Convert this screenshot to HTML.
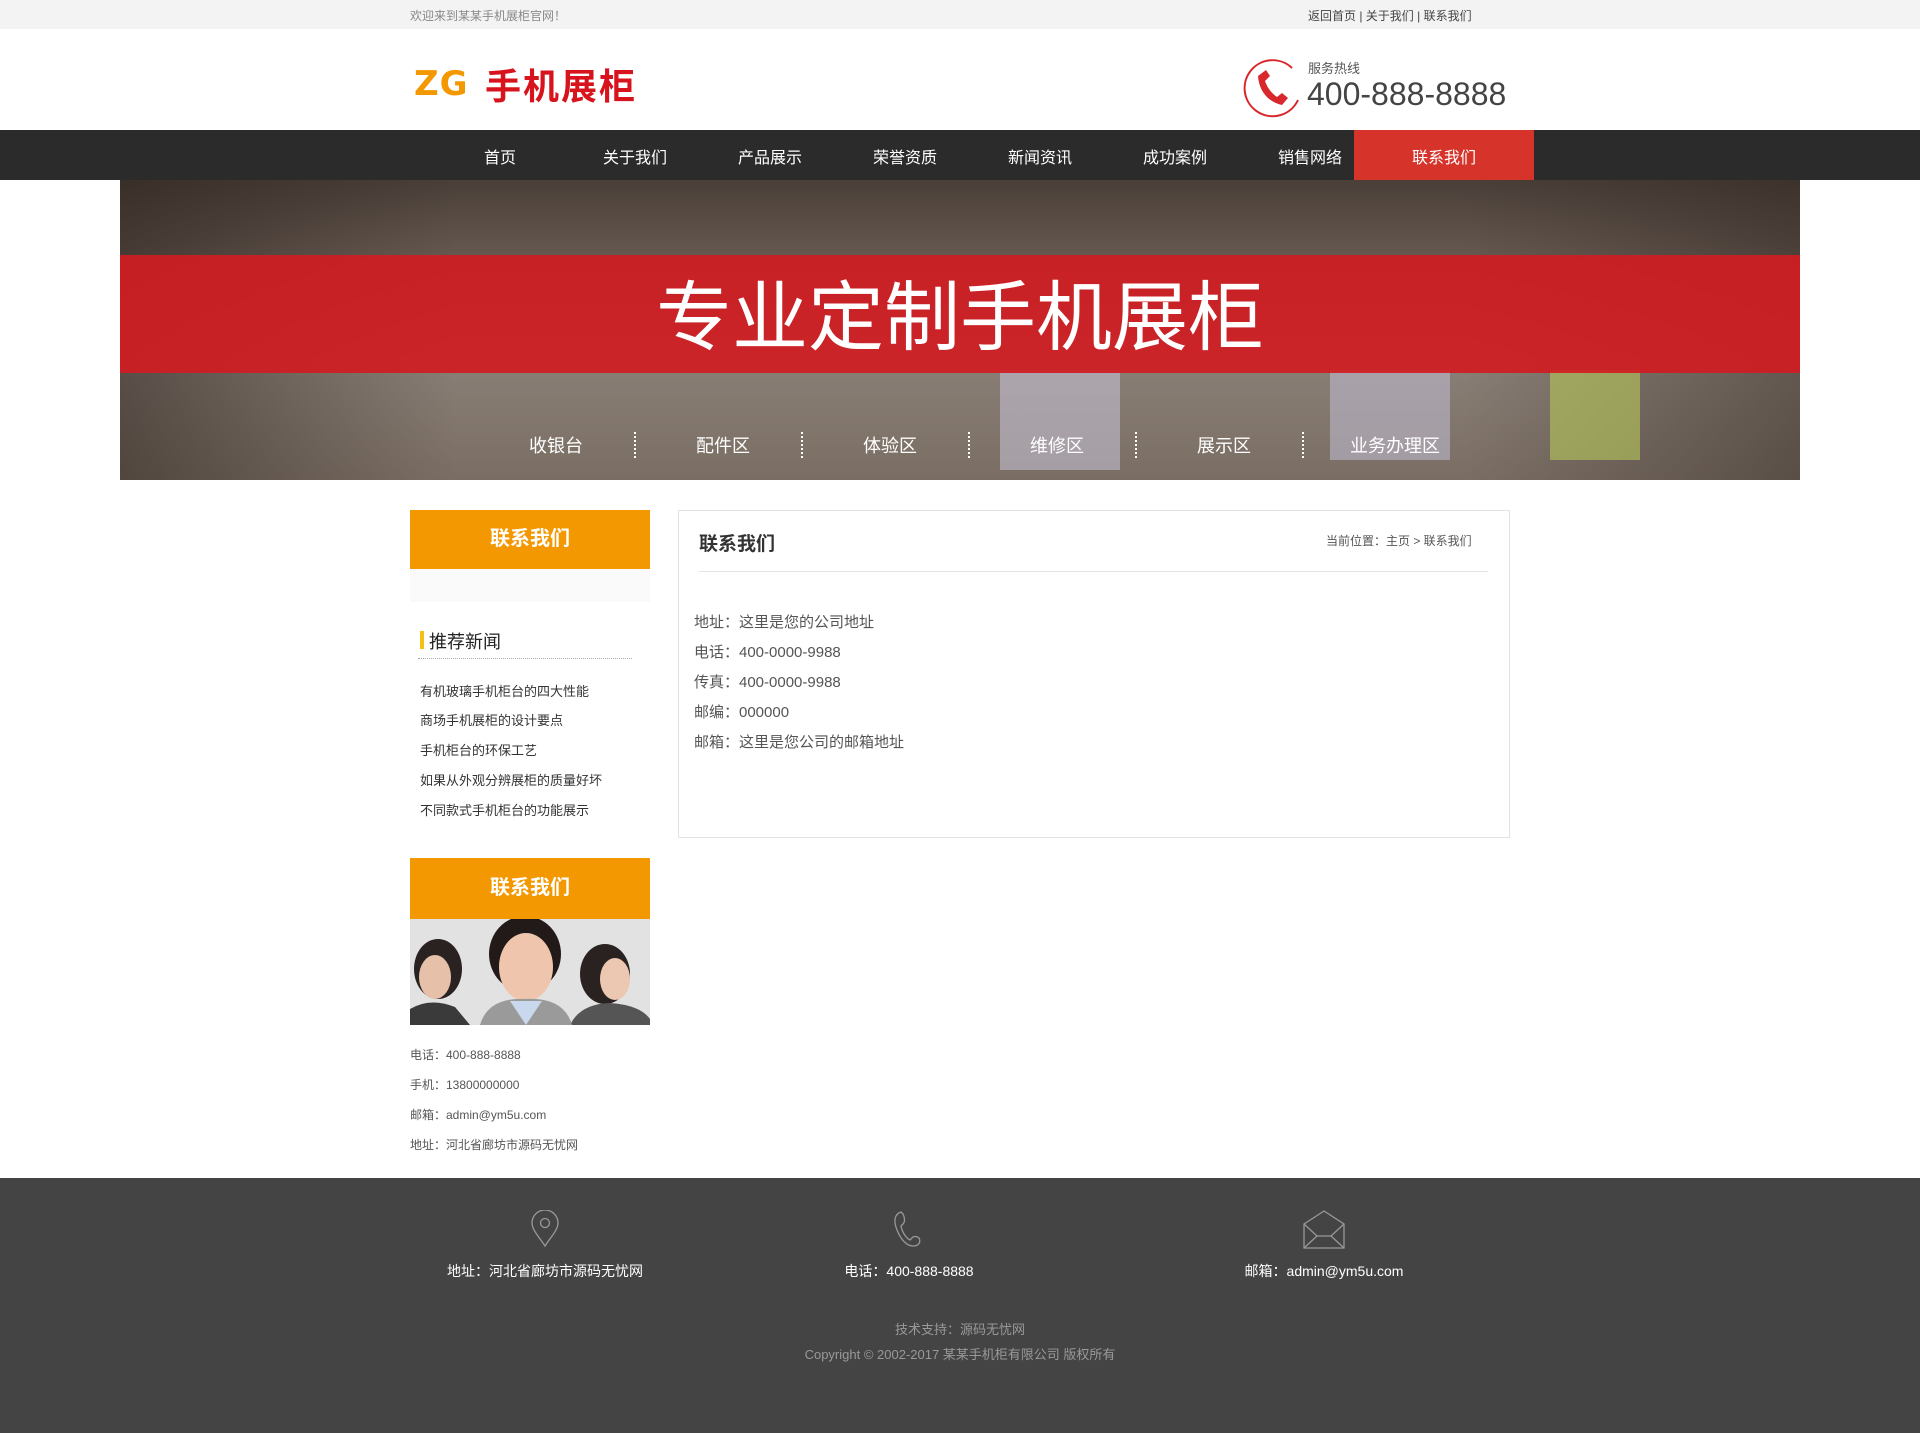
<!DOCTYPE html>
<html><head><meta charset="utf-8"><style>
*{margin:0;padding:0;box-sizing:border-box}
body{width:1920px;height:1433px;position:relative;background:#fff;font-family:"Liberation Sans","Noto Sans CJK SC",sans-serif;overflow:hidden;color:#333}
.a{position:absolute;white-space:nowrap}
</style></head><body>
<div class="a" style="left:0;top:0;width:1920px;height:29px;background:#f3f3f3"></div>
<div class="a" style="left:410px;top:7px;font-size:12px;color:#888">欢迎来到某某手机展柜官网！</div>
<div class="a" style="left:1308px;top:7px;font-size:12px;color:#444">返回首页 | 关于我们 | 联系我们</div>

<div class="a" style="left:414px;top:64px;font-size:34px;font-weight:bold;color:#f39800;letter-spacing:1px;font-family:'DejaVu Sans',sans-serif">ZG</div>
<div class="a" style="left:485px;top:58px;font-size:36px;font-weight:bold;color:#d7141d;letter-spacing:2px;font-family:'Noto Sans CJK SC',sans-serif">手机展柜</div>

<svg class="a" style="left:1240px;top:56px" width="64" height="64" viewBox="0 0 64 64">
<path d="M52 12 A28 28 0 1 0 58 44" fill="none" stroke="#d8282b" stroke-width="2"/>
<path d="M18 20 l8-6 4 6-5 5 c2 6 6 12 12 16 l5-4 6 5-6 7 c-14-3-23-14-24-29z" fill="#d8282b"/>
</svg>
<div class="a" style="left:1308px;top:58px;font-size:13px;color:#555">服务热线</div>
<div class="a" style="left:1307px;top:76px;font-size:32px;color:#444;font-family:'Liberation Sans',sans-serif">400-888-8888</div>

<div class="a" style="left:0;top:130px;width:1920px;height:50px;background:#2b2b2b"></div>
<div class="a" style="left:1354px;top:130px;width:180px;height:50px;background:#d6332a"></div>
<div style="font-size:16px;color:#fff">
<div class="a" style="left:460px;top:144px;width:80px;text-align:center">首页</div>
<div class="a" style="left:595px;top:144px;width:80px;text-align:center">关于我们</div>
<div class="a" style="left:730px;top:144px;width:80px;text-align:center">产品展示</div>
<div class="a" style="left:865px;top:144px;width:80px;text-align:center">荣誉资质</div>
<div class="a" style="left:1000px;top:144px;width:80px;text-align:center">新闻资讯</div>
<div class="a" style="left:1135px;top:144px;width:80px;text-align:center">成功案例</div>
<div class="a" style="left:1270px;top:144px;width:80px;text-align:center">销售网络</div>
<div class="a" style="left:1404px;top:144px;width:80px;text-align:center">联系我们</div>
</div>

<div class="a" style="left:120px;top:180px;width:1680px;height:300px;background:linear-gradient(180deg,#4a3f38 0%,#6a5d55 30%,#8a7f76 60%,#7a6e64 100%)"></div>
<div class="a" style="left:120px;top:180px;width:1680px;height:300px;background:linear-gradient(90deg,rgba(40,30,25,.5) 0%,rgba(0,0,0,0) 20%,rgba(0,0,0,0) 80%,rgba(40,30,25,.4) 100%)"></div>
<div class="a" style="left:1000px;top:370px;width:120px;height:100px;background:#c8c5d8;opacity:.55"></div>
<div class="a" style="left:1330px;top:370px;width:120px;height:90px;background:#c3c0d6;opacity:.55"></div>
<div class="a" style="left:1550px;top:370px;width:90px;height:90px;background:#b8c85a;opacity:.6"></div>
<div class="a" style="left:120px;top:255px;width:1680px;height:118px;background:rgba(208,28,34,.92)"></div>
<div class="a" style="left:0;top:256px;width:1920px;text-align:center;font-size:76px;color:#fff;font-family:'Noto Sans CJK SC',sans-serif;letter-spacing:0">专业定制手机展柜</div>
<div style="font-size:18px;color:#fff">
<div class="a" style="left:506px;top:432px;width:100px;text-align:center">收银台</div>
<div class="a" style="left:673px;top:432px;width:100px;text-align:center">配件区</div>
<div class="a" style="left:840px;top:432px;width:100px;text-align:center">体验区</div>
<div class="a" style="left:1007px;top:432px;width:100px;text-align:center">维修区</div>
<div class="a" style="left:1174px;top:432px;width:100px;text-align:center">展示区</div>
<div class="a" style="left:1345px;top:432px;width:100px;text-align:center">业务办理区</div>
</div>
<div class="a" style="left:634px;top:432px;height:26px;border-left:2px dotted #fff"></div>
<div class="a" style="left:801px;top:432px;height:26px;border-left:2px dotted #fff"></div>
<div class="a" style="left:968px;top:432px;height:26px;border-left:2px dotted #fff"></div>
<div class="a" style="left:1135px;top:432px;height:26px;border-left:2px dotted #fff"></div>
<div class="a" style="left:1302px;top:432px;height:26px;border-left:2px dotted #fff"></div>

<div class="a" style="left:410px;top:510px;width:240px;height:59px;background:#f39800;color:#fff;font-size:20px;font-weight:bold;text-align:center;line-height:59px">联系我们</div>
<div class="a" style="left:410px;top:569px;width:240px;height:33px;background:#fafafa"></div>
<div class="a" style="left:420px;top:631px;width:4px;height:18px;background:#f5c116"></div>
<div class="a" style="left:429px;top:628px;font-size:18px;color:#222">推荐新闻</div>
<div class="a" style="left:418px;top:658px;width:214px;border-top:1px dotted #aaa"></div>
<div style="font-size:13px;color:#333">
<div class="a" style="left:420px;top:681px">有机玻璃手机柜台的四大性能</div>
<div class="a" style="left:420px;top:710px">商场手机展柜的设计要点</div>
<div class="a" style="left:420px;top:740px">手机柜台的环保工艺</div>
<div class="a" style="left:420px;top:770px">如果从外观分辨展柜的质量好坏</div>
<div class="a" style="left:420px;top:800px">不同款式手机柜台的功能展示</div>
</div>

<div class="a" style="left:410px;top:858px;width:240px;height:61px;background:#f39800;color:#fff;font-size:20px;font-weight:bold;text-align:center;line-height:61px">联系我们</div>
<svg class="a" style="left:410px;top:919px" width="240" height="106" viewBox="0 0 240 106">
<rect width="240" height="106" fill="#e2e2e2"/>
<ellipse cx="28" cy="50" rx="24" ry="30" fill="#2a2220"/>
<ellipse cx="25" cy="58" rx="16" ry="22" fill="#e6c0a8"/>
<path d="M0 106 L0 90 Q20 78 45 88 L60 106z" fill="#3a3a3a"/>
<ellipse cx="195" cy="55" rx="25" ry="30" fill="#2a2220"/>
<ellipse cx="205" cy="60" rx="15" ry="21" fill="#ecc8b2"/>
<path d="M160 106 Q170 85 200 84 Q230 86 240 100 L240 106z" fill="#555"/>
<ellipse cx="115" cy="35" rx="36" ry="38" fill="#221a18"/>
<ellipse cx="116" cy="48" rx="27" ry="34" fill="#efc6ad"/>
<path d="M70 106 Q78 78 116 80 Q154 78 162 106z" fill="#9a9a9a"/>
<path d="M100 82 L116 106 L132 82z" fill="#c9d8ec"/>
</svg>
<div style="font-size:12px;color:#555">
<div class="a" style="left:410px;top:1046px">电话：400-888-8888</div>
<div class="a" style="left:410px;top:1076px">手机：13800000000</div>
<div class="a" style="left:410px;top:1106px">邮箱：admin@ym5u.com</div>
<div class="a" style="left:410px;top:1136px">地址：河北省廊坊市源码无忧网</div>
</div>

<div class="a" style="left:678px;top:510px;width:832px;height:328px;border:1px solid #e3e3e3"></div>
<div class="a" style="left:699px;top:529px;font-size:19px;font-weight:bold;color:#333">联系我们</div>
<div class="a" style="left:1326px;top:532px;font-size:12px;color:#555">当前位置：主页 &gt; 联系我们</div>
<div class="a" style="left:699px;top:571px;width:789px;border-top:1px solid #e5e5e5"></div>
<div style="font-size:15px;color:#555">
<div class="a" style="left:694px;top:611px">地址：这里是您的公司地址</div>
<div class="a" style="left:694px;top:641px">电话：400-0000-9988</div>
<div class="a" style="left:694px;top:671px">传真：400-0000-9988</div>
<div class="a" style="left:694px;top:701px">邮编：000000</div>
<div class="a" style="left:694px;top:731px">邮箱：这里是您公司的邮箱地址</div>
</div>

<div class="a" style="left:0;top:1178px;width:1920px;height:255px;background:#444"></div>
<svg class="a" style="left:530px;top:1210px" width="30" height="38" viewBox="0 0 30 38" fill="none" stroke="#999" stroke-width="1.3">
<path d="M15 36 C10 28 2 20 2 13 A13 13 0 0 1 28 13 C28 20 20 28 15 36z"/><circle cx="15" cy="13" r="4.5"/>
</svg>
<svg class="a" style="left:893px;top:1210px" width="34" height="40" viewBox="0 0 34 40" fill="none" stroke="#999" stroke-width="1.3">
<path d="M8 2 C2 4 0 10 4 20 C8 30 14 36 20 36 C26 36 28 32 26 28 C24 26 20 26 19 28 L17 30 C13 28 9 22 8 16 L10 14 C12 12 12 8 10 4z"/>
</svg>
<svg class="a" style="left:1303px;top:1210px" width="42" height="40" viewBox="0 0 42 40" fill="none" stroke="#999" stroke-width="1.3">
<path d="M1 14 L21 1 L41 14 L41 38 L1 38z"/><path d="M1 14 L14 26 L28 26 L41 14"/><path d="M1 38 L14 26 M41 38 L28 26"/>
</svg>
<div style="font-size:14px;color:#fff">
<div class="a" style="left:345px;top:1261px;width:400px;text-align:center">地址：河北省廊坊市源码无忧网</div>
<div class="a" style="left:709px;top:1261px;width:400px;text-align:center">电话：400-888-8888</div>
<div class="a" style="left:1124px;top:1261px;width:400px;text-align:center">邮箱：admin@ym5u.com</div>
</div>
<div class="a" style="left:0;top:1319px;width:1920px;text-align:center;font-size:13px;color:#999">技术支持：源码无忧网</div>
<div class="a" style="left:0;top:1344px;width:1920px;text-align:center;font-size:13px;color:#999">Copyright © 2002-2017 某某手机柜有限公司 版权所有</div>
</body></html>
